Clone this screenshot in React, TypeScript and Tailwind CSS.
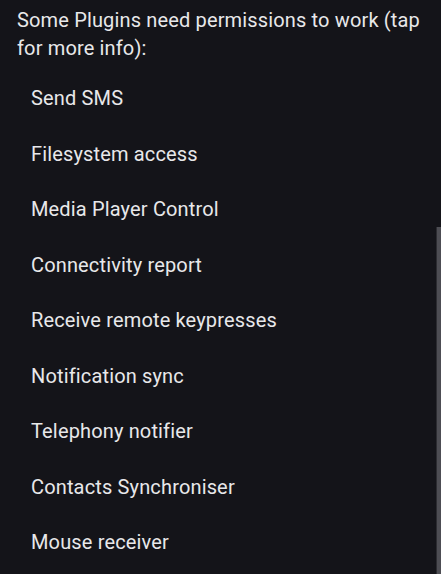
export default function App() {
  const items = [
    "Send SMS",
    "Filesystem access",
    "Media Player Control",
    "Connectivity report",
    "Receive remote keypresses",
    "Notification sync",
    "Telephony notifier",
    "Contacts Synchroniser",
    "Mouse receiver",
  ];

  return (
    <div
      className="relative h-[574px] w-[441px] overflow-hidden bg-[#141419] text-[#e8e8ea]"
      style={{ fontFamily: "Roboto, 'Noto Sans', sans-serif" }}
    >
      <p className="px-[17px] pt-[6px] text-[20px] leading-[28px] tracking-[0.15px]">
        Some Plugins need permissions to work (tap for more info):
      </p>
      <ul className="mt-[9px]">
        {items.map((it) => (
          <li key={it} className="h-[55.5px] pl-[31px] text-[20px] leading-[55.5px] tracking-[0.15px]">
            {it}
          </li>
        ))}
      </ul>
      {/* scrollbar thumb */}
      <div className="absolute right-0 top-[227px] bottom-0 w-[5px] border-l border-[#2c2c31] bg-[#4d4d53]" />
    </div>
  );
}
